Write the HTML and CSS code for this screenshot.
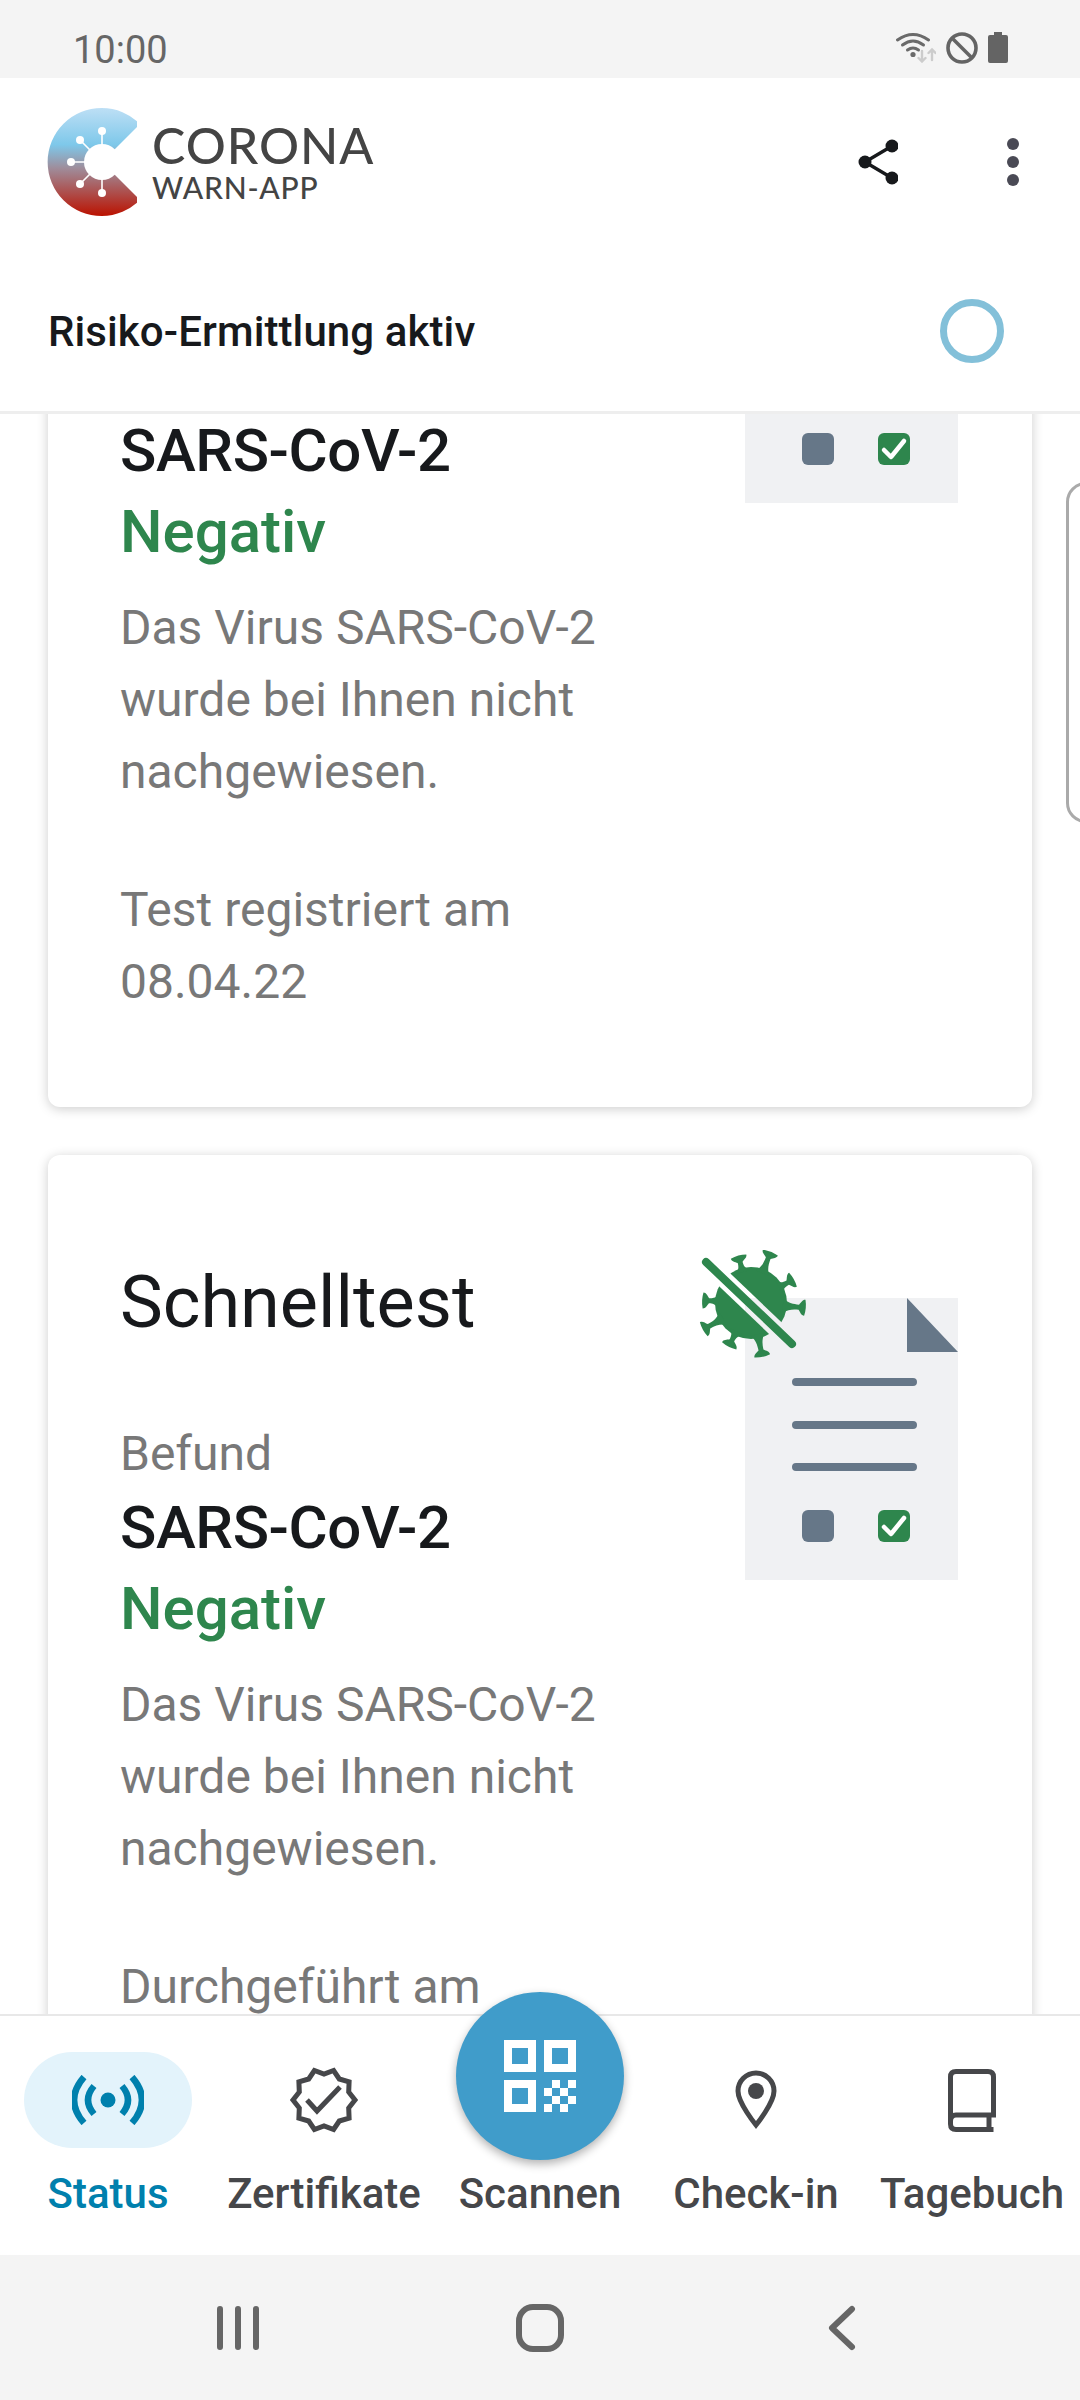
FILE: index.html
```html
<!DOCTYPE html>
<html lang="de">
<head>
  <meta charset="UTF-8">
  <title>Corona-Warn-App</title>
  <meta name="viewport" content="width=device-width, initial-scale=1.0">
  <link rel="stylesheet" href="styles.css">
</head>
<body>
<div class="screen">

  <div class="status-bar">
    <span class="clock">10:00</span>
    <div class="status-icons">
      <svg width="40" height="31" viewBox="0 0 40 31" fill="none" stroke-linecap="round">
        <g stroke="#6a6a6a" stroke-width="3">
          <path d="M1.5 8Q17-3 32.5 8"/>
          <path d="M6.5 13Q17 5 27.5 13"/>
          <path d="M11.5 18Q17 14 22.5 18"/>
        </g>
        <circle cx="17" cy="22.5" r="2.6" fill="#6a6a6a"/>
        <g stroke="#cccccc" stroke-width="2.4">
          <path d="M26 19V29M22.5 26L26 29.5L29.5 26"/>
          <path d="M36 28V18M32.5 21L36 17.5L39.5 21"/>
        </g>
      </svg>
      <svg width="32" height="32" viewBox="0 0 32 32" fill="none" stroke="#646464" stroke-width="3.6">
        <circle cx="16" cy="16" r="14"/>
        <path d="M6 6L26 26"/>
      </svg>
      <svg width="20" height="31" viewBox="0 0 20 31" fill="#646464">
        <path d="M6 0H14V3H18Q20 3 20 5V29Q20 31 18 31H2Q0 31 0 29V5Q0 3 2 3H6Z"/>
      </svg>
    </div>
  </div>

  <div class="app-bar">
    <div class="brand">
      <svg class="logo" width="90" height="110" viewBox="47 107 90 110">
        <defs>
          <linearGradient id="logo-fill" x1="0" y1="0" x2="0" y2="1">
            <stop offset="0" stop-color="#bddff5"/>
            <stop offset="0.34" stop-color="#7ec8ea"/>
            <stop offset="0.56" stop-color="#9f8c9a"/>
            <stop offset="1" stop-color="#bb1200"/>
          </linearGradient>
        </defs>
        <path d="M140 124A54 54 0 1 0 140 200L102 162Z" fill="url(#logo-fill)"/>
        <circle cx="102" cy="162" r="18" fill="#fff"/>
        <g stroke="#fff" stroke-width="1.6">
          <path d="M102 131V150M80 140L92 152M71 162H90M80 184L92 172M102 193V174"/>
        </g>
        <g fill="#fff">
          <circle cx="102" cy="131" r="4"/>
          <circle cx="80" cy="140" r="4"/>
          <circle cx="71" cy="162" r="4"/>
          <circle cx="80" cy="184" r="4"/>
          <circle cx="102" cy="193" r="4"/>
        </g>
      </svg>
      <div class="wordmark">
        <span class="wordmark-top">CORONA</span>
        <span class="wordmark-sub">WARN-APP</span>
      </div>
    </div>
    <div class="bar-actions">
      <svg width="40" height="46" viewBox="0 0 40 46" fill="#17191c">
        <path d="M7 23L34 7M7 23L34 39" stroke="#17191c" stroke-width="3.4" fill="none"/>
        <circle cx="7" cy="23" r="6.5"/>
        <circle cx="34" cy="7" r="6.5"/>
        <circle cx="34" cy="39" r="6.5"/>
      </svg>
      <svg width="12" height="48" viewBox="0 0 12 48" fill="#4a4a55">
        <circle cx="6" cy="6" r="6"/>
        <circle cx="6" cy="24" r="6"/>
        <circle cx="6" cy="42" r="6"/>
      </svg>
    </div>
  </div>

  <div class="risk-row">
    <span class="risk-label">Risiko-Ermittlung aktiv</span>
    <span class="risk-ring"></span>
  </div>

  <div class="scroller">
    <div class="cards">

      <section class="card card-scrolled">
        <div class="card-text">
          <p class="result-virus">SARS-CoV-2</p>
          <p class="result-value">Negativ</p>
          <p class="copy">Das Virus SARS-CoV-2 wurde bei Ihnen nicht nachgewiesen.</p>
          <p class="copy copy-date">Test registriert am 08.04.22</p>
        </div>
        <svg class="card-art" width="260" height="330" viewBox="0 0 260 330">
          <defs>
            <mask id="slash-cut" maskUnits="userSpaceOnUse" x="0" y="0" width="120" height="120">
              <rect width="120" height="120" fill="#fff"/>
              <path d="M7 12L93 94" stroke="#000" stroke-width="17"/>
            </mask>
            <path id="spike-long" d="M-7-32C-3-38-2.5-42-2.5-48C-5-50-8-51-8-54Q0-56 8-54C8-51 5-50 2.5-48C2.5-42 3-38 7-32Z"/>
            <path id="spike-short" d="M-7-32C-3-36-2.5-38-2.5-42C-5-44-8-45-8-48Q0-50 8-48C8-45 5-44 2.5-42C2.5-38 3-36 7-32Z"/>
          </defs>
          <g id="test-doc">
            <rect x="46" y="48" width="213" height="282" fill="#f0f1f3"/>
            <path d="M208 48L259 102H208Z" fill="#667788"/>
            <path d="M97 132H214M97 175H214M97 217H214" stroke="#667788" stroke-width="8" stroke-linecap="round"/>
            <rect x="103" y="260" width="32" height="32" rx="6" fill="#667788"/>
            <rect x="179" y="260" width="32" height="32" rx="6" fill="#2e864d"/>
            <path d="M185 277L192 284L205 268" fill="none" stroke="#fff" stroke-width="4.5" stroke-linecap="round" stroke-linejoin="round"/>
            <g fill="#2e864d">
              <g mask="url(#slash-cut)">
                <circle cx="52" cy="53" r="36"/>
                <use href="#spike-long" transform="translate(52 53) rotate(21)"/>
                <use href="#spike-short" transform="translate(52 53) rotate(-15)"/>
                <use href="#spike-short" transform="translate(52 53) rotate(61)"/>
                <use href="#spike-long" transform="translate(52 53) rotate(95)"/>
                <use href="#spike-long" transform="translate(52 53) rotate(168)"/>
                <use href="#spike-short" transform="translate(52 53) rotate(207)"/>
                <use href="#spike-long" transform="translate(52 53) rotate(241)"/>
                <use href="#spike-short" transform="translate(52 53) rotate(273)"/>
              </g>
              <path d="M7 12L93 94" stroke="#2e864d" stroke-width="8" stroke-linecap="round"/>
            </g>
          </g>
        </svg>
      </section>

      <section class="card">
        <div class="card-text">
          <h2 class="card-title">Schnelltest</h2>
          <p class="result-label">Befund</p>
          <p class="result-virus">SARS-CoV-2</p>
          <p class="result-value">Negativ</p>
          <p class="copy">Das Virus SARS-CoV-2 wurde bei Ihnen nicht nachgewiesen.</p>
          <p class="copy copy-date">Durchgeführt am</p>
        </div>
        <svg class="card-art" width="260" height="330" viewBox="0 0 260 330">
          <use href="#test-doc"/>
        </svg>
      </section>

    </div>
    <div class="peek-card"></div>
  </div>

  <nav class="tabs">
    <div class="tab tab-active">
      <div class="tab-icon">
        <svg width="72" height="50" viewBox="0 0 72 50" fill="none" stroke="#0080ad" stroke-width="6.5">
          <path d="M12 2Q-8 25 12 48"/>
          <path d="M60 2Q80 25 60 48"/>
          <path d="M22 11Q10 25 22 39"/>
          <path d="M50 11Q62 25 50 39"/>
          <circle cx="36" cy="25" r="7.5" fill="#0080ad" stroke="none"/>
        </svg>
      </div>
      <span class="tab-label">Status</span>
    </div>
    <div class="tab">
      <div class="tab-icon">
        <svg width="72" height="72" viewBox="0 0 72 72" fill="none" stroke="#46474a" stroke-width="5">
          <path d="M67 36L60.7 44L61.1 54.2L51.3 57L45.6 65.5L36 62L26.4 65.5L20.7 57L10.9 54.2L11.3 44L5 36L11.3 28L10.9 17.8L20.7 15L26.4 6.5L36 10L45.6 6.5L51.3 15L61.1 17.8L60.7 28Z"/>
          <path d="M19 36L29 47L52 23"/>
        </svg>
      </div>
      <span class="tab-label">Zertifikate</span>
    </div>
    <div class="tab">
      <div class="tab-icon"></div>
      <span class="tab-label">Scannen</span>
    </div>
    <div class="tab">
      <div class="tab-icon">
        <svg width="42" height="60" viewBox="0 0 42 60" fill="none" stroke="#46474a" stroke-width="5">
          <path d="M21 55C21 55 3 33 3 21A18 18 0 0 1 39 21C39 33 21 55 21 55Z"/>
          <circle cx="21" cy="21" r="8" fill="#46474a" stroke="none"/>
        </svg>
      </div>
      <span class="tab-label">Check-in</span>
    </div>
    <div class="tab">
      <div class="tab-icon">
        <svg width="48" height="63" viewBox="0 0 48 63" fill="none" stroke="#46474a" stroke-width="5">
          <path d="M45.5 60.5H8Q2.5 60.5 2.5 55V8Q2.5 2.5 8 2.5H40Q45.5 2.5 45.5 8V46H8Q2.5 46 2.5 52"/>
          <path d="M41 46V58"/>
        </svg>
      </div>
      <span class="tab-label">Tagebuch</span>
    </div>

    <div class="scan-button">
      <svg width="72" height="72" viewBox="0 0 72 72" fill="#fff">
        <path fill-rule="evenodd" d="M0 0H32V32H0ZM8 8V24H24V8Z"/>
        <path fill-rule="evenodd" d="M40 0H72V32H40ZM48 8V24H64V8Z"/>
        <path fill-rule="evenodd" d="M0 40H32V72H0ZM8 48V64H24V48Z"/>
        <path d="M48 40H56V48H48ZM64 40H72V48H64ZM40 48H48V56H40ZM56 48H64V56H56ZM48 56H56V64H48ZM64 56H72V64H64ZM40 64H48V72H40ZM56 64H64V72H56Z"/>
      </svg>
    </div>
  </nav>

  <div class="system-nav">
    <svg width="42" height="46" viewBox="0 0 42 46" fill="none" stroke="#666" stroke-width="6" stroke-linecap="round">
      <path d="M3 4V42M21 4V42M39 4V42"/>
    </svg>
    <svg width="48" height="48" viewBox="0 0 48 48" fill="none" stroke="#666" stroke-width="6">
      <rect x="3" y="3" width="42" height="42" rx="14"/>
    </svg>
    <svg width="28" height="46" viewBox="0 0 28 46" fill="none" stroke="#666" stroke-width="6" stroke-linecap="round" stroke-linejoin="round">
      <path d="M24 4L4 23L24 42"/>
    </svg>
  </div>

</div>
</body>
</html>
```

FILE: styles.css
```css
* {
  box-sizing: border-box;
}
body {
  margin: 0;
  font-family: "Roboto", "Liberation Sans", sans-serif;
  background: #ffffff;
  color: #17191c;
}
.screen {
  display: flex;
  flex-direction: column;
  width: 1080px;
  height: 2400px;
  overflow: hidden;
}

/* status bar */
.status-bar {
  flex: none;
  display: flex;
  align-items: center;
  justify-content: space-between;
  height: 78px;
  padding: 22px 72px 0 73px;
  background: #f4f4f4;
}
.clock {
  font-size: 38px;
  color: #666666;
}
.status-icons {
  display: flex;
  align-items: center;
  gap: 10px;
  margin-top: -5px;
}

/* app bar */
.app-bar {
  flex: none;
  display: flex;
  align-items: center;
  justify-content: space-between;
  height: 168px;
  padding: 0 61px 0 47px;
}
.brand {
  display: flex;
  align-items: center;
  gap: 15px;
}
.logo {
  display: block;
}
.wordmark {
  display: flex;
  flex-direction: column;
  gap: 2px;
  margin-top: -4px;
  font-family: "Lato", "Liberation Sans", sans-serif;
  font-weight: 500;
  color: #444444;
}
.wordmark-top {
  font-size: 50px;
  line-height: 60px;
  margin-bottom: -8px;
  letter-spacing: 1px;
}
.wordmark-sub {
  font-size: 30px;
  line-height: 36px;
  letter-spacing: 0.8px;
}
.bar-actions {
  display: flex;
  align-items: center;
  gap: 109px;
}

/* risk row */
.risk-row {
  flex: none;
  display: flex;
  align-items: center;
  justify-content: space-between;
  height: 168px;
  padding: 5px 76px 0 48px;
  border-bottom: 3px solid #eeeeee;
}
.risk-label {
  font-size: 42px;
  font-weight: 500;
  letter-spacing: 0.1px;
}
.risk-ring {
  width: 64px;
  height: 64px;
  border: 7px solid #83c0d9;
  border-radius: 50%;
}

/* scrolled content */
.scroller {
  flex: 1;
  min-height: 0;
  display: flex;
  align-items: flex-start;
  gap: 34px;
  padding-left: 48px;
  overflow: hidden;
}
.cards {
  flex: none;
  display: flex;
  flex-direction: column;
  gap: 48px;
  width: 984px;
  margin-top: -336px;
}
.card {
  display: flex;
  justify-content: space-between;
  align-items: flex-start;
  padding: 95px 73px 89px 72px;
  background: #ffffff;
  border-radius: 12px;
  box-shadow: 0 2px 12px rgba(0, 0, 0, 0.2);
}
/* top of this card is scrolled under the header */
.card-scrolled .card-text {
  padding-top: 234px;
}
.card-text {
  width: 540px;
}
.card-art {
  flex: none;
  display: block;
}
.card-title {
  margin: 2px 0 0;
  font-size: 72px;
  line-height: 102px;
  font-weight: 400;
}
.card p {
  margin: 0;
}
.card .result-label {
  margin-top: 70px;
  font-size: 48px;
  line-height: 60px;
  color: #787878;
}
.card .result-virus {
  margin-top: 4px;
  font-size: 60px;
  line-height: 80px;
  font-weight: 500;
  letter-spacing: -0.4px;
}
.card .result-value {
  margin-top: 1px;
  font-size: 60px;
  line-height: 80px;
  font-weight: 500;
  color: #2e864d;
}
.card .copy {
  margin-top: 20px;
  font-size: 48px;
  line-height: 72px;
  color: #787878;
}
.card .copy-date {
  margin-top: 66px;
}
.peek-card {
  flex: none;
  width: 120px;
  height: 341px;
  margin-top: 68px;
  border: 3px solid #aaaaaa;
  border-radius: 20px;
  background: #ffffff;
}

/* bottom tabs */
.tabs {
  flex: none;
  position: relative;
  display: grid;
  grid-template-columns: repeat(5, 1fr);
  height: 241px;
  padding-top: 36px;
  background: #ffffff;
  border-top: 2px solid #e8e8e8;
}
.tab {
  display: flex;
  flex-direction: column;
  align-items: center;
  gap: 18px;
}
.tab-icon {
  display: flex;
  align-items: center;
  justify-content: center;
  width: 168px;
  height: 96px;
  border-radius: 48px;
}
.tab-active .tab-icon {
  background: #e3f3fb;
}
.tab-label {
  font-size: 42px;
  line-height: 56px;
  font-weight: 500;
  white-space: nowrap;
  color: #46474a;
}
.tab-active .tab-label {
  color: #0080ad;
}
.scan-button {
  position: absolute;
  top: -24px;
  left: 456px;
  display: flex;
  align-items: center;
  justify-content: center;
  width: 168px;
  height: 168px;
  border-radius: 50%;
  background: #409cca;
  box-shadow: 0 4px 10px rgba(0, 0, 0, 0.3);
}

/* android nav */
.system-nav {
  flex: none;
  display: grid;
  grid-template-columns: repeat(3, 302px);
  justify-content: center;
  justify-items: center;
  align-items: center;
  height: 145px;
  background: #f4f4f4;
}
```
